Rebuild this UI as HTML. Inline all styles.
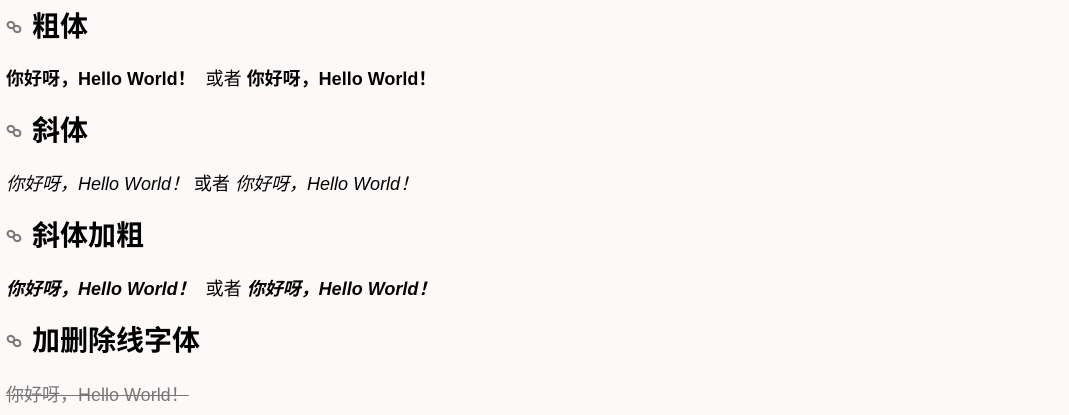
<!DOCTYPE html>
<html><head><meta charset="utf-8"><style>
body{margin:0;background:#fdf9f8;font-family:"Liberation Sans","Noto Sans CJK SC",sans-serif;color:#000;width:1069px;height:415px;overflow:hidden;position:relative}
.h{position:absolute;left:6px;font-size:28px;font-weight:bold;line-height:30px;height:30px;white-space:nowrap}
.h svg{position:absolute;left:0;top:8px}
.h span{position:absolute;left:26px;top:0}
.p{position:absolute;left:6px;font-size:18px;line-height:22px;white-space:nowrap}
.s{color:#777;text-decoration:line-through}
</style></head><body>
<div class="h" style="top:12px"><svg width="16" height="14" viewBox="0 0 16 14"><g fill="none" stroke="#777" stroke-width="2"><ellipse cx="5" cy="5" rx="3.5" ry="3" transform="rotate(30 5 5)"/><ellipse cx="11" cy="9" rx="3.5" ry="3" transform="rotate(30 11 9)"/></g></svg><span>粗体</span></div>
<div class="p" style="top:68px"><b>你好呀，Hello World！</b>&nbsp; 或者 <b>你好呀，Hello World！</b></div>
<div class="h" style="top:116px"><svg width="16" height="14" viewBox="0 0 16 14"><g fill="none" stroke="#777" stroke-width="2"><ellipse cx="5" cy="5" rx="3.5" ry="3" transform="rotate(30 5 5)"/><ellipse cx="11" cy="9" rx="3.5" ry="3" transform="rotate(30 11 9)"/></g></svg><span>斜体</span></div>
<div class="p" style="top:173px"><i>你好呀，Hello World！</i> 或者 <i>你好呀，Hello World！</i></div>
<div class="h" style="top:221px"><svg width="16" height="14" viewBox="0 0 16 14"><g fill="none" stroke="#777" stroke-width="2"><ellipse cx="5" cy="5" rx="3.5" ry="3" transform="rotate(30 5 5)"/><ellipse cx="11" cy="9" rx="3.5" ry="3" transform="rotate(30 11 9)"/></g></svg><span>斜体加粗</span></div>
<div class="p" style="top:278px"><b><i>你好呀，Hello World！</i></b>&nbsp; 或者 <b><i>你好呀，Hello World！</i></b></div>
<div class="h" style="top:326px"><svg width="16" height="14" viewBox="0 0 16 14"><g fill="none" stroke="#777" stroke-width="2"><ellipse cx="5" cy="5" rx="3.5" ry="3" transform="rotate(30 5 5)"/><ellipse cx="11" cy="9" rx="3.5" ry="3" transform="rotate(30 11 9)"/></g></svg><span>加删除线字体</span></div>
<div class="p s" style="top:384px">你好呀，Hello World！</div>
</body></html>
